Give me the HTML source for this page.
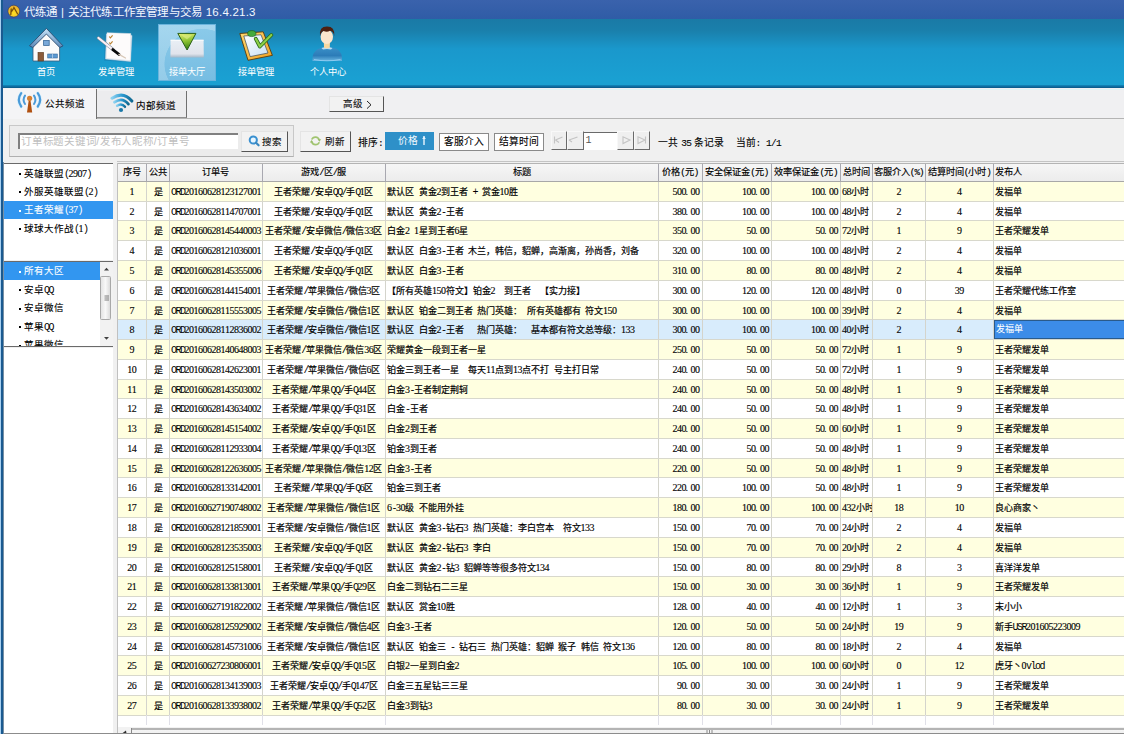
<!DOCTYPE html>
<html lang="zh-CN"><head><meta charset="utf-8">
<style>
*{margin:0;padding:0;box-sizing:border-box}
html,body{width:1124px;height:734px;overflow:hidden;background:#f0f0f0;font-family:"Liberation Sans",sans-serif;position:relative;text-spacing-trim:space-all;font-kerning:none}
.abs{position:absolute}
#lb0{left:0;top:0;width:1px;height:734px;background:#a8d0f0}
#lb1{left:1px;top:0;width:2.2px;height:734px;background:#1a5a90}
#lb2{left:3.2px;top:162px;width:1.3px;height:572px;background:#7890a4}
#title{left:1px;top:0;width:1123px;height:19px;background:linear-gradient(#3a62ac,#2f5ca6)}
#ttext{left:24px;top:2.5px;color:#f4f8ff;font-size:11.5px;letter-spacing:0.22px;white-space:nowrap}
#tool{left:3px;top:19px;width:1121px;height:66px;background:linear-gradient(#1a7aa6 0,#1a80ac 12px,#1a98cc 30px,#1aa0d2 60px,#1aa0d0 100%)}
#toolline{left:3px;top:84.5px;width:1121px;height:4px;background:linear-gradient(#1288bc,#0a5e90 60%,#0c5a86)}
.tb{position:absolute;top:24px;width:58px;height:57px;color:#fff;font-size:10px;text-align:center}
.tlbl{position:absolute;top:65.7px;width:58px;color:#fff;font-size:9.3px;line-height:12px;text-align:center;white-space:nowrap}
.tb.act{background:radial-gradient(ellipse 62px 58px at 44px 40px,rgba(255,255,255,0) 0,rgba(255,255,255,0) 60%,rgba(255,255,255,0.22) 61%,rgba(255,255,255,0.22) 100%),linear-gradient(#8ccbea,#76bde2);box-shadow:inset 0 0 0 1px #6ab4dc;overflow:hidden}
#tabs{left:3px;top:88px;width:1121px;height:31px;background:#f0f0f2}
#tabline{left:3px;top:117.5px;width:1121px;height:1.8px;background:#b4b4b4}
.tab{position:absolute;font-size:9.5px;color:#000;white-space:nowrap}
#tab1{left:3px;top:89px;width:94px;height:30px;background:#f4f4f6;border-right:1px solid #707070}
#tab2{left:97px;top:91px;width:90px;height:27px;background:#ececee;border-right:1px solid #707070;border-bottom:1px solid #909090}
.btn{position:absolute;background:#f2f2f2;border:1px solid #e4e4e4;border-right:1.5px solid #555;border-bottom:1.5px solid #555;font-size:10px;color:#111;text-align:center;white-space:nowrap}
#grp{left:9px;top:125px;width:285px;height:32px;border:1px solid #c8c8c8;border-bottom-color:#b0b0b0;background:#ececec}
#search{left:18px;top:133px;width:220px;height:16px;background:#fff;border-top:2px solid #808080;border-left:2px solid #808080;font-size:10.5px;color:#c0c0c0;line-height:13px;padding-left:1px;white-space:nowrap;letter-spacing:0.75px;overflow:hidden}
.lbtxt{position:absolute;font-size:9.75px;color:#000;white-space:nowrap;word-spacing:0.5px}
b.m2{font-weight:normal;font-family:"Liberation Mono",monospace;font-size:9.5px;letter-spacing:-0.7px}
#price{left:384.5px;top:132px;width:49.5px;height:18px;background:#2e90c8;color:#f4fbff;font-size:9.75px;line-height:18px;text-align:left;padding-left:13.5px;white-space:nowrap}
.sbtn{position:absolute;top:132.5px;height:18px;background:#fff;border:1px solid #8a8a8a;font-size:9.75px;color:#000;line-height:16px;text-align:center;white-space:nowrap}
.pg{position:absolute;top:131px;height:19px;width:16.5px;background:#efefef;border-top:1px solid #f8f8f8;border-left:1px solid #f8f8f8;border-right:1px solid #6a6a6a;border-bottom:1.5px solid #6a6a6a}
#pinput{left:583px;top:131.5px;width:34px;height:18px;background:#fff;border-top:1.5px solid #6a6a6a;border-left:1.5px solid #6a6a6a;font-family:"Liberation Mono",monospace;font-size:10px;color:#555;line-height:16px;padding-left:1.5px}
/* left panel */
#lp1{left:3px;top:162.5px;width:110px;height:97.5px;background:#fff;border-top:1.2px solid #6a6a6a}
#lp2{left:3px;top:261px;width:110px;height:86px;background:#fff;border-top:1.5px solid #6a6a6a;border-bottom:1.5px solid #6a6a6a;overflow:hidden}
#lp3{left:3px;top:348px;width:110px;height:386px;background:#fff}
.li{position:absolute;left:0;width:100%;height:18px;font-size:9.5px;color:#000;white-space:nowrap;line-height:18px;padding-left:21px}
.li::before{content:"";position:absolute;left:15.8px;top:8.6px;width:2.2px;height:2.2px;background:currentColor}
.li.s{background:#3296f0;color:#fff}
.li .n{font-family:"Liberation Mono",monospace;font-size:9px;letter-spacing:-0.9px}
/* table */
#tbl{left:117px;top:163px;width:1007px;height:564px;background:#fff;border-left:1px solid #c0c0c0;overflow:hidden}
#thead{position:absolute;left:0;top:0;width:1100px;height:18.6px;background:linear-gradient(#f6f6f6,#ececec);border-top:1px solid #b4b4b4;border-bottom:1px solid #a8a8a8}
.hc{position:absolute;top:0;height:17px;border-right:1px solid #a8a8b0;font-size:9.2px;color:#000;-webkit-text-stroke:0.15px #000;text-align:center;line-height:17px;white-space:nowrap}
.row{position:absolute;left:0;width:1100px;height:19.77px;border-bottom:1px solid #d8d8cc}
.row.odd{background:#ffffe0}
.row.even{background:#ffffff}
.row.sel{background:#d8ecfc}
.c{position:absolute;top:0;height:19px;border-right:1px solid #d4d4cc;font-size:9px;color:#000;-webkit-text-stroke:0.2px #000;line-height:20px;white-space:nowrap;overflow:hidden}
.c.c{text-align:center}
.c.l{text-align:left;padding-left:1px}
.c.r{text-align:right;padding-right:2px}
.c.selc{background:#3c8ce8;color:#fff;-webkit-text-stroke:0.1px #fff;border:1.5px solid #2a5a8a;line-height:16px}
b.hp{font-weight:normal;font-family:"Liberation Mono",monospace;font-size:9.2px;letter-spacing:-0.92px}
b.m{font-weight:normal;font-family:"Liberation Serif",serif;font-size:10px;letter-spacing:-0.5px;-webkit-text-stroke:0.12px currentColor;vertical-align:0}
b.mm{font-weight:normal;font-family:"Liberation Mono",monospace;font-size:10px;letter-spacing:-1.5px;-webkit-text-stroke:0}
i.dt{font-style:normal;display:inline-block;width:5px;margin-left:-0.5px;letter-spacing:0;text-align:left}
i.sp{display:inline-block;width:4.5px}
.vl{position:absolute;top:552px;width:1px;height:10px;background:#e0e0e8}
#hscroll{left:117px;top:727px;width:1007px;height:7px;background:#f2f2f2;border-left:1px solid #c0c0c0}
.li,.lbtxt,.sbtn,.btn,.tab{-webkit-text-stroke:0.1px #000}
.li.s{-webkit-text-stroke:0.1px #fff}
</style></head>
<body>
<div class="abs" id="title"></div>
<svg class="abs" style="left:7px;top:4px" width="14" height="14" viewBox="0 0 14 14"><defs><radialGradient id="coin" cx="0.5" cy="0.7" r="0.7"><stop offset="0" stop-color="#ffe020"/><stop offset="1" stop-color="#e8a830"/></radialGradient></defs><circle cx="6.8" cy="7.1" r="5.9" fill="url(#coin)" stroke="#3a3a50" stroke-width="0.6"/><path d="M4.2 5 L3.8 10.5 M6.8 3.2 L10.6 10 M6.3 4.8 L4.6 7.5" stroke="#7a5008" stroke-width="1.3" fill="none" stroke-linecap="round"/></svg>
<div class="abs" id="ttext">代练通 | 关注代练工作室管理与交易 16.4.21.3</div>
<div class="abs" id="tool"></div>
<div class="abs" id="toolline"></div>

<div class="tb act" style="left:158px"></div>
<svg class="abs" style="left:24px;top:24px" width="44" height="40" viewBox="0 0 44 40">
 <defs><linearGradient id="roof" x1="0" y1="0" x2="0" y2="1"><stop offset="0" stop-color="#c8e4f8"/><stop offset="1" stop-color="#5a88b8"/></linearGradient></defs>
 <path d="M9 21 L22.4 8.5 L35.6 21 L35.6 37 L9 37 Z" fill="#fbfbfb" stroke="#3a5a78" stroke-width="0.8"/>
 <path d="M5.5 21.8 L22.4 4.4 L39 21.8 L35.8 23.5 L22.4 10 L8.8 23.5 Z" fill="url(#roof)" stroke="#2c4c70" stroke-width="0.9" stroke-linejoin="round"/>
 <rect x="14" y="28.4" width="5.6" height="8.6" fill="#8a5a3a" stroke="#5a3a20" stroke-width="0.6"/>
 <rect x="19.6" y="16.4" width="5.6" height="5" fill="#78a8d8" stroke="#3a6a9a" stroke-width="0.8"/>
 <rect x="23.7" y="30" width="9.6" height="4" fill="#5a98d0" stroke="#3a6a9a" stroke-width="0.6"/>
 <line x1="28.5" y1="30" x2="28.5" y2="34" stroke="#d8e8f8" stroke-width="0.6"/>
</svg>
<svg class="abs" style="left:94px;top:26px" width="44" height="38" viewBox="0 0 44 38">
 <path d="M11.5 8.5 L37.8 8 L37 35 L11 33.8 Z" fill="#1a6a9a" opacity="0.35" transform="translate(-0.8,1)"/>
 <path d="M12.5 8 L38 9.5 L36.5 35.5 L11.5 33 Z" fill="#e4ecf4" stroke="#c0d0e0" stroke-width="0.5"/>
 <path d="M13 6.7 L36.8 7.6 L36.3 34.6 L12.2 32.4 Z" fill="#fdfbfb" stroke="#d0d8e0" stroke-width="0.5"/>
 <path d="M15.2 10.5 l1.2 1.4 l2.2 -2.6" stroke="#b88030" stroke-width="1.1" fill="none"/>
 <path d="M15.2 16.5 l1.2 1.4 l2.2 -2.6" stroke="#b88030" stroke-width="1.1" fill="none"/>
 <line x1="4.5" y1="12" x2="19" y2="23.6" stroke="#7a8a98" stroke-width="3.2" stroke-linecap="round"/>
 <line x1="4.5" y1="12" x2="19" y2="23.6" stroke="#faf0f6" stroke-width="2.2" stroke-linecap="round"/>
 <line x1="18.8" y1="23.6" x2="25" y2="28.4" stroke="#0a0a0a" stroke-width="2.8" stroke-linecap="round"/>
 <line x1="25" y1="28.4" x2="31.5" y2="32" stroke="#d8c8b8" stroke-width="1.4" stroke-linecap="round"/>
</svg>
<svg class="abs" style="left:166px;top:28px" width="44" height="36" viewBox="0 0 44 36">
 <defs><linearGradient id="tray" x1="0" y1="0" x2="0" y2="1"><stop offset="0" stop-color="#f0f2f6"/><stop offset="0.8" stop-color="#e8e6ec"/><stop offset="0.88" stop-color="#d0d4dc"/><stop offset="1" stop-color="#a8b8c8"/></linearGradient>
 <linearGradient id="tri" x1="0.3" y1="0" x2="0.5" y2="1"><stop offset="0" stop-color="#e0ec70"/><stop offset="0.5" stop-color="#88c030"/><stop offset="1" stop-color="#307a10"/></linearGradient></defs>
 <path d="M4.6 11.8 L37.6 11.8 L37.8 29.4 L4.4 29.4 Z" fill="url(#tray)" opacity="0.93"/>
 <path d="M4.6 12.3 L37.6 12.3" stroke="#ffffff" stroke-width="0.8"/>
 <path d="M11.8 5.4 L29.9 5.4 L21.1 22 Z" fill="url(#tri)" stroke="#2a6018" stroke-width="1" stroke-linejoin="round"/>
 <path d="M15.5 7.2 L26 7.2 L21 11.5 Z" fill="#f0f8a0" opacity="0.45"/>
</svg>
<svg class="abs" style="left:234px;top:26px" width="44" height="38" viewBox="0 0 44 38">
 <defs><linearGradient id="clip" x1="0" y1="0" x2="1" y2="1"><stop offset="0" stop-color="#ffd870"/><stop offset="1" stop-color="#f0a020"/></linearGradient>
 <linearGradient id="ppr" x1="0" y1="0" x2="1" y2="1"><stop offset="0" stop-color="#ffffff"/><stop offset="1" stop-color="#c8e0f4"/></linearGradient></defs>
 <path d="M5.8 7.5 L29.2 5.8 L38.4 29.4 L14 34.3 Z" fill="url(#clip)" stroke="#5a3a08" stroke-width="0.9" stroke-linejoin="round"/>
 <path d="M9.8 10 L27 8.8 L34 27 L16.2 30.6 Z" fill="url(#ppr)" stroke="#3a4a5a" stroke-width="0.7"/>
 <ellipse cx="17.8" cy="7.6" rx="4.2" ry="3" fill="#44aa3c" stroke="#1a5a1a" stroke-width="0.6"/>
 <path d="M21.8 12.8 L25.9 20.5 L37.3 9" fill="none" stroke="#2a6a1a" stroke-width="3.8" stroke-linecap="round" stroke-linejoin="round"/>
 <path d="M21.8 12.8 L25.9 20.5 L37.3 9" fill="none" stroke="#8cd048" stroke-width="2.2" stroke-linecap="round" stroke-linejoin="round"/>
</svg>
<svg class="abs" style="left:306px;top:24px" width="44" height="40" viewBox="0 0 44 40">
 <defs><linearGradient id="body" x1="0" y1="0" x2="0" y2="1"><stop offset="0" stop-color="#3a90c8"/><stop offset="0.6" stop-color="#2c7cb8"/><stop offset="1" stop-color="#68b4e0"/></linearGradient></defs>
 <path d="M6.5 37 Q6 28 12 25 Q15 23.5 17 23.5 L25 23.5 Q28 23.5 31 25 Q36.5 28 36 37 Z" fill="url(#body)"/>
 <path d="M8 35.5 Q21 38 34.5 35.5" stroke="#8ccaf0" stroke-width="1.2" fill="none"/>
 <path d="M15.5 24 Q21 22 26.5 24 L25 25.5 Q21 24.5 17 25.5 Z" fill="#b8e0f8"/>
 <path d="M17.8 16 L24 16 L23.8 23.8 Q21 25 18 23.8 Z" fill="#f8d8a0"/>
 <ellipse cx="20.8" cy="12.8" rx="6.2" ry="7.2" fill="#fbe6cc"/>
 <path d="M14 12 Q13 2.5 21 2.6 Q29 2.5 28.2 12 Q27.5 7 24 6.8 Q21 8.5 17.5 7 Q14.8 8 14 12 Z" fill="#4e2010"/>
</svg>
<div class="tlbl" style="left:17px">首页</div>
<div class="tlbl" style="left:87px">发单管理</div>
<div class="tlbl" style="left:158px">接单大厅</div>
<div class="tlbl" style="left:227px">接单管理</div>
<div class="tlbl" style="left:299px">个人中心</div>

<div class="abs" id="tabs"></div>
<div class="abs" id="tabline"></div>
<div class="abs" style="left:3px;top:88.5px;width:1121px;height:1.5px;background:#dff4f6"></div>
<div class="abs" id="tab1"><span class="tab" style="left:42px;top:7px">公共频道</span></div>
<svg class="abs" style="left:14px;top:90px" width="30" height="26" viewBox="0 0 30 26">
 <g fill="none" stroke-linecap="round">
 <path d="M7.2 3.2 Q2.5 9.8 7.2 16.5" stroke="#d8f0fc" stroke-width="3.6"/>
 <path d="M23.8 3.2 Q28.5 9.8 23.8 16.5" stroke="#d8f0fc" stroke-width="3.6"/>
 <path d="M7.2 3.2 Q2.5 9.8 7.2 16.5" stroke="#4a9ad8" stroke-width="2.2"/>
 <path d="M11 5.6 Q8.2 9.8 11 14" stroke="#4a9ad8" stroke-width="2"/>
 <path d="M23.8 3.2 Q28.5 9.8 23.8 16.5" stroke="#4a9ad8" stroke-width="2.2"/>
 <path d="M20 5.6 Q22.8 9.8 20 14" stroke="#4a9ad8" stroke-width="2"/>
 </g>
 <path d="M14.8 9.8 L16.4 9.8 L18.2 22.4 L13 22.4 Z" fill="#b05010"/>
 <circle cx="15.6" cy="8.3" r="2.6" fill="#d88030"/>
</svg>
<div class="abs" id="tab2"><span class="tab" style="left:39px;top:7px">内部频道</span></div>
<svg class="abs" style="left:106px;top:90px" width="30" height="26" viewBox="0 0 30 26">
 <defs><linearGradient id="wf" x1="0" y1="0" x2="1" y2="0"><stop offset="0" stop-color="#8ad0f0"/><stop offset="0.5" stop-color="#2a98d0"/><stop offset="1" stop-color="#106890"/></linearGradient></defs>
 <g transform="translate(-1,0) rotate(8 15 20)" fill="none" stroke="url(#wf)" stroke-linecap="round">
 <path d="M5.5 9.5 Q15.5 0.5 25.5 9.5" stroke-width="3"/>
 <path d="M8.5 13 Q15.5 6.5 22.5 13" stroke-width="2.8"/>
 <path d="M11.5 16.2 Q15.5 12.5 19.5 16.2" stroke-width="2.4"/>
 </g>
 <circle cx="15" cy="20" r="2.1" fill="#1a78a8"/>
</svg>
<div class="btn" style="left:328.5px;top:96.3px;width:55.5px;height:16px;line-height:14px;text-align:left;padding-left:13px;font-size:9.5px">高级</div>
<svg class="abs" style="left:364.5px;top:98.5px" width="8" height="12" viewBox="0 0 8 12"><path d="M2 2 L6 5.8 L2 9.6" fill="none" stroke="#222" stroke-width="1"/></svg>

<div class="abs" id="grp"></div>
<div class="abs" id="search">订单标题关键词/发布人昵称/订单号</div>
<div class="btn" style="left:241px;top:131px;width:47px;height:21px;line-height:19px;padding-left:14.5px;font-size:9.5px">搜索</div>
<svg class="abs" style="left:240px;top:128px" width="24" height="24" viewBox="0 0 24 24">
 <circle cx="13.3" cy="12" r="3.6" fill="#e8f6ff" stroke="#3a90d0" stroke-width="2"/>
 <line x1="16" y1="14.8" x2="18.6" y2="17.3" stroke="#3a88c0" stroke-width="2.2" stroke-linecap="round"/>
</svg>
<div class="btn" style="left:300px;top:131px;width:51px;height:21px;line-height:19px;padding-left:18px;font-size:9.5px">刷新</div>
<svg class="abs" style="left:298px;top:128px" width="24" height="24" viewBox="0 0 24 24">
 <path d="M13.74 11.53 A4 4 0 0 1 21.2 11.9" fill="none" stroke="#a0c470" stroke-width="1.7"/>
 <path d="M21.26 14.27 A4 4 0 0 1 13.8 13.9" fill="none" stroke="#a0c470" stroke-width="1.7"/>
 <path d="M19.6 11.2 L23.2 11.2 L21.4 13.8 Z" fill="#98bc68"/>
 <path d="M11.8 14.6 L15.4 14.6 L13.6 12 Z" fill="#98bc68"/>
</svg>
<div class="lbtxt" style="left:358px;top:134.5px">排序<b class="m2">:</b></div>
<div class="abs" id="price">价格</div>
<svg class="abs" style="left:420px;top:135px" width="8" height="12" viewBox="0 0 8 12"><path d="M4 1 L4 10" stroke="#eaf6ff" stroke-width="1.4"/><path d="M2.2 4 L4 1.2 L5.8 4 Z" fill="#eaf6ff"/></svg>
<div class="sbtn" style="left:439px;width:50px">客服介入</div>
<div class="sbtn" style="left:494px;width:50px">结算时间</div>
<div class="pg" style="left:550.5px"></div>
<div class="pg" style="left:566.5px;width:17px"></div>
<div class="abs" id="pinput">1</div>
<div class="pg" style="left:617px;width:16.5px"></div>
<div class="pg" style="left:633.5px"></div>
<svg class="abs" style="left:548px;top:128px" width="104" height="24" viewBox="0 0 104 24">
 <g stroke="#c4c4c4" stroke-width="1.1" fill="none">
  <path d="M6.5 8.5 L6.5 15.5 M7.5 12 L14.5 9"/>
  <path d="M7.5 12 L11 14.5"/>
  <path d="M21 12 L29.5 9 M21 12 L24 14"/>
  <path d="M75 8.8 L75 15.5 L82 12 Z"/>
  <path d="M90 8.8 L90 15.5 L97 12 Z M97.5 8.5 L97.5 15.5"/>
 </g>
</svg>
<div class="lbtxt" style="left:658px;top:134.5px">一共 <b class="m2">35</b> 条记录</div>
<div class="lbtxt" style="left:735.5px;top:134.5px">当前<b class="m2">:&nbsp;1/1</b></div>

<div class="abs" id="lp1">
<div class="li" style="top:1px">英雄联盟<b class="mm">(</b><b class="m">2907</b><b class="mm">)</b></div>
<div class="li" style="top:19px">外服英雄联盟<b class="mm">(</b><b class="m">2</b><b class="mm">)</b></div>
<div class="li s" style="top:37.5px">王者荣耀<b class="mm">(</b><b class="m">37</b><b class="mm">)</b></div>
<div class="li" style="top:56px">球球大作战<b class="mm">(</b><b class="m">1</b><b class="mm">)</b></div>
</div>
<div class="abs" id="lp2">
<div class="li s" style="top:0;width:96.5px">所有大区</div>
<div class="li" style="top:18.5px">安卓<b class="mm">QQ</b></div>
<div class="li" style="top:37px">安卓微信</div>
<div class="li" style="top:55.5px">苹果<b class="mm">QQ</b></div>
<div class="li" style="top:74px">苹果微信</div>
<div style="position:absolute;left:96.5px;top:0;width:13px;height:85px;background:#f2f2f2"></div>
<div style="position:absolute;left:97px;top:13.5px;width:10.5px;height:44px;border:1px solid #a8a8a8;border-radius:1.5px;background:linear-gradient(90deg,#e4e4e4,#f8f8f8 50%,#dcdcdc)"></div>
<svg style="position:absolute;left:96.5px;top:0" width="13" height="85" viewBox="0 0 13 85">
 <path d="M4 8.5 L6.5 5.8 L9 8.5 Z" fill="#404040"/>
 <path d="M4 75 L6.5 77.7 L9 75 Z" fill="#404040"/>
 <path d="M4.5 34 L9 34 M4.5 36 L9 36 M4.5 38 L9 38" stroke="#606060" stroke-width="0.8"/>
</svg>
</div>
<div class="abs" id="lp3"></div>

<div class="abs" style="left:117px;top:160.5px;width:1007px;height:1px;background:#c4c4c4"></div>
<div class="abs" id="tbl">
<div id="thead"><div class="hc" style="left:-0.50px;width:29.50px">序号</div><div class="hc" style="left:29.00px;width:23.00px">公共</div><div class="hc" style="left:52.00px;width:92.50px">订单号</div><div class="hc" style="left:144.50px;width:123.50px">游戏<b class="hp">/</b>区<b class="hp">/</b>服</div><div class="hc" style="left:268.00px;width:273.00px">标题</div><div class="hc" style="left:541.00px;width:43.50px">价格<b class="hp">(</b>元<b class="hp">)</b></div><div class="hc" style="left:584.50px;width:69.50px">安全保证金<b class="hp">(</b>元<b class="hp">)</b></div><div class="hc" style="left:654.00px;width:69.00px">效率保证金<b class="hp">(</b>元<b class="hp">)</b></div><div class="hc" style="left:723.00px;width:31.50px">总时间</div><div class="hc" style="left:754.50px;width:53.50px">客服介入<b class="hp">(</b><b class="hp">%</b><b class="hp">)</b></div><div class="hc" style="left:808.00px;width:67.50px">结算时间<b class="hp">(</b>小时<b class="hp">)</b></div><div class="hc" style="text-align:left;padding-left:1px;left:875.50px;width:207.00px">发布人</div></div>
<div class="row odd" style="top:18.90px"><div class="c c" style="left:-0.50px;width:29.50px"><b class="m">1</b></div><div class="c c" style="left:29.00px;width:23.00px">是</div><div class="c l" style="left:52.00px;width:92.50px"><b class="mm">ORD</b><b class="m">20160628123127001</b></div><div class="c c" style="left:144.50px;width:123.50px">王者荣耀<b class="mm">/</b>安卓<b class="mm">QQ/</b>手<b class="mm">Q</b><b class="m">1</b>区</div><div class="c l" style="left:268.00px;width:273.00px">默认区<b class="mm"> </b>黄金<b class="m">2</b>到王者<b class="mm"> + </b>赏金<b class="m">10</b>胜</div><div class="c r" style="left:541.00px;width:43.50px"><b class="m">500<i class="dt">.</i>00</b></div><div class="c r" style="left:584.50px;width:69.50px"><b class="m">100<i class="dt">.</i>00</b></div><div class="c r" style="left:654.00px;width:69.00px"><b class="m">100<i class="dt">.</i>00</b></div><div class="c l" style="left:723.00px;width:31.50px"><b class="m">68</b>小时</div><div class="c c" style="left:754.50px;width:53.50px"><b class="m">2</b></div><div class="c c" style="left:808.00px;width:67.50px"><b class="m">4</b></div><div class="c l" style="left:875.50px;width:207.00px">发福单</div></div><div class="row even" style="top:38.67px"><div class="c c" style="left:-0.50px;width:29.50px"><b class="m">2</b></div><div class="c c" style="left:29.00px;width:23.00px">是</div><div class="c l" style="left:52.00px;width:92.50px"><b class="mm">ORD</b><b class="m">20160628114707001</b></div><div class="c c" style="left:144.50px;width:123.50px">王者荣耀<b class="mm">/</b>安卓<b class="mm">QQ/</b>手<b class="mm">Q</b><b class="m">1</b>区</div><div class="c l" style="left:268.00px;width:273.00px">默认区<b class="mm"> </b>黄金<b class="m">2</b><b class="mm">-</b>王者</div><div class="c r" style="left:541.00px;width:43.50px"><b class="m">380<i class="dt">.</i>00</b></div><div class="c r" style="left:584.50px;width:69.50px"><b class="m">100<i class="dt">.</i>00</b></div><div class="c r" style="left:654.00px;width:69.00px"><b class="m">100<i class="dt">.</i>00</b></div><div class="c l" style="left:723.00px;width:31.50px"><b class="m">48</b>小时</div><div class="c c" style="left:754.50px;width:53.50px"><b class="m">2</b></div><div class="c c" style="left:808.00px;width:67.50px"><b class="m">4</b></div><div class="c l" style="left:875.50px;width:207.00px">发福单</div></div><div class="row odd" style="top:58.44px"><div class="c c" style="left:-0.50px;width:29.50px"><b class="m">3</b></div><div class="c c" style="left:29.00px;width:23.00px">是</div><div class="c l" style="left:52.00px;width:92.50px"><b class="mm">ORD</b><b class="m">20160628145440003</b></div><div class="c c" style="left:144.50px;width:123.50px">王者荣耀<b class="mm">/</b>安卓微信<b class="mm">/</b>微信<b class="m">33</b>区</div><div class="c l" style="left:268.00px;width:273.00px">白金<b class="m">2</b><b class="mm"> </b><b class="m">1</b>星到王者<b class="m">6</b>星</div><div class="c r" style="left:541.00px;width:43.50px"><b class="m">350<i class="dt">.</i>00</b></div><div class="c r" style="left:584.50px;width:69.50px"><b class="m">50<i class="dt">.</i>00</b></div><div class="c r" style="left:654.00px;width:69.00px"><b class="m">50<i class="dt">.</i>00</b></div><div class="c l" style="left:723.00px;width:31.50px"><b class="m">72</b>小时</div><div class="c c" style="left:754.50px;width:53.50px"><b class="m">1</b></div><div class="c c" style="left:808.00px;width:67.50px"><b class="m">9</b></div><div class="c l" style="left:875.50px;width:207.00px">王者荣耀发单</div></div><div class="row even" style="top:78.21px"><div class="c c" style="left:-0.50px;width:29.50px"><b class="m">4</b></div><div class="c c" style="left:29.00px;width:23.00px">是</div><div class="c l" style="left:52.00px;width:92.50px"><b class="mm">ORD</b><b class="m">20160628121036001</b></div><div class="c c" style="left:144.50px;width:123.50px">王者荣耀<b class="mm">/</b>安卓<b class="mm">QQ/</b>手<b class="mm">Q</b><b class="m">1</b>区</div><div class="c l" style="left:268.00px;width:273.00px">默认区<b class="mm"> </b>白金<b class="m">3</b><b class="mm">-</b>王者<b class="mm"> </b>木兰，韩信，貂蝉，高渐离，孙尚香，刘备</div><div class="c r" style="left:541.00px;width:43.50px"><b class="m">320<i class="dt">.</i>00</b></div><div class="c r" style="left:584.50px;width:69.50px"><b class="m">100<i class="dt">.</i>00</b></div><div class="c r" style="left:654.00px;width:69.00px"><b class="m">100<i class="dt">.</i>00</b></div><div class="c l" style="left:723.00px;width:31.50px"><b class="m">48</b>小时</div><div class="c c" style="left:754.50px;width:53.50px"><b class="m">2</b></div><div class="c c" style="left:808.00px;width:67.50px"><b class="m">4</b></div><div class="c l" style="left:875.50px;width:207.00px">发福单</div></div><div class="row odd" style="top:97.98px"><div class="c c" style="left:-0.50px;width:29.50px"><b class="m">5</b></div><div class="c c" style="left:29.00px;width:23.00px">是</div><div class="c l" style="left:52.00px;width:92.50px"><b class="mm">ORD</b><b class="m">20160628145355006</b></div><div class="c c" style="left:144.50px;width:123.50px">王者荣耀<b class="mm">/</b>安卓<b class="mm">QQ/</b>手<b class="mm">Q</b><b class="m">1</b>区</div><div class="c l" style="left:268.00px;width:273.00px">默认区<b class="mm"> </b>白金<b class="m">3</b><b class="mm">-</b>王者</div><div class="c r" style="left:541.00px;width:43.50px"><b class="m">310<i class="dt">.</i>00</b></div><div class="c r" style="left:584.50px;width:69.50px"><b class="m">80<i class="dt">.</i>00</b></div><div class="c r" style="left:654.00px;width:69.00px"><b class="m">80<i class="dt">.</i>00</b></div><div class="c l" style="left:723.00px;width:31.50px"><b class="m">48</b>小时</div><div class="c c" style="left:754.50px;width:53.50px"><b class="m">2</b></div><div class="c c" style="left:808.00px;width:67.50px"><b class="m">4</b></div><div class="c l" style="left:875.50px;width:207.00px">发福单</div></div><div class="row even" style="top:117.75px"><div class="c c" style="left:-0.50px;width:29.50px"><b class="m">6</b></div><div class="c c" style="left:29.00px;width:23.00px">是</div><div class="c l" style="left:52.00px;width:92.50px"><b class="mm">ORD</b><b class="m">20160628144154001</b></div><div class="c c" style="left:144.50px;width:123.50px">王者荣耀<b class="mm">/</b>苹果微信<b class="mm">/</b>微信<b class="m">3</b>区</div><div class="c l" style="left:268.00px;width:273.00px">【所有英雄<b class="m">150</b>符文】铂金<b class="m">2</b><i class="sp"></i><b class="mm"> </b>到王者<i class="sp"></i><b class="mm"> </b>【实力接】</div><div class="c r" style="left:541.00px;width:43.50px"><b class="m">300<i class="dt">.</i>00</b></div><div class="c r" style="left:584.50px;width:69.50px"><b class="m">120<i class="dt">.</i>00</b></div><div class="c r" style="left:654.00px;width:69.00px"><b class="m">120<i class="dt">.</i>00</b></div><div class="c l" style="left:723.00px;width:31.50px"><b class="m">48</b>小时</div><div class="c c" style="left:754.50px;width:53.50px"><b class="m">0</b></div><div class="c c" style="left:808.00px;width:67.50px"><b class="m">39</b></div><div class="c l" style="left:875.50px;width:207.00px">王者荣耀代练工作室</div></div><div class="row odd" style="top:137.52px"><div class="c c" style="left:-0.50px;width:29.50px"><b class="m">7</b></div><div class="c c" style="left:29.00px;width:23.00px">是</div><div class="c l" style="left:52.00px;width:92.50px"><b class="mm">ORD</b><b class="m">20160628115553005</b></div><div class="c c" style="left:144.50px;width:123.50px">王者荣耀<b class="mm">/</b>安卓微信<b class="mm">/</b>微信<b class="m">1</b>区</div><div class="c l" style="left:268.00px;width:273.00px">默认区<b class="mm"> </b>铂金二到王者<b class="mm"> </b>热门英雄：<b class="mm"> </b>所有英雄都有<b class="mm"> </b>符文<b class="m">150</b></div><div class="c r" style="left:541.00px;width:43.50px"><b class="m">300<i class="dt">.</i>00</b></div><div class="c r" style="left:584.50px;width:69.50px"><b class="m">100<i class="dt">.</i>00</b></div><div class="c r" style="left:654.00px;width:69.00px"><b class="m">100<i class="dt">.</i>00</b></div><div class="c l" style="left:723.00px;width:31.50px"><b class="m">39</b>小时</div><div class="c c" style="left:754.50px;width:53.50px"><b class="m">2</b></div><div class="c c" style="left:808.00px;width:67.50px"><b class="m">4</b></div><div class="c l" style="left:875.50px;width:207.00px">发福单</div></div><div class="row sel" style="top:157.29px"><div class="c c" style="left:-0.50px;width:29.50px"><b class="m">8</b></div><div class="c c" style="left:29.00px;width:23.00px">是</div><div class="c l" style="left:52.00px;width:92.50px"><b class="mm">ORD</b><b class="m">20160628112836002</b></div><div class="c c" style="left:144.50px;width:123.50px">王者荣耀<b class="mm">/</b>安卓微信<b class="mm">/</b>微信<b class="m">1</b>区</div><div class="c l" style="left:268.00px;width:273.00px">默认区<b class="mm"> </b>白金<b class="m">2</b><b class="mm">-</b>王者<i class="sp"></i><b class="mm"> </b><i class="sp"></i>热门英雄：<i class="sp"></i><b class="mm"> </b>基本都有符文总等级：<b class="m">133</b></div><div class="c r" style="left:541.00px;width:43.50px"><b class="m">300<i class="dt">.</i>00</b></div><div class="c r" style="left:584.50px;width:69.50px"><b class="m">100<i class="dt">.</i>00</b></div><div class="c r" style="left:654.00px;width:69.00px"><b class="m">100<i class="dt">.</i>00</b></div><div class="c l" style="left:723.00px;width:31.50px"><b class="m">40</b>小时</div><div class="c c" style="left:754.50px;width:53.50px"><b class="m">2</b></div><div class="c c" style="left:808.00px;width:67.50px"><b class="m">4</b></div><div class="c l selc" style="left:875.50px;width:207.00px">发福单</div></div><div class="row odd" style="top:177.06px"><div class="c c" style="left:-0.50px;width:29.50px"><b class="m">9</b></div><div class="c c" style="left:29.00px;width:23.00px">是</div><div class="c l" style="left:52.00px;width:92.50px"><b class="mm">ORD</b><b class="m">20160628140648003</b></div><div class="c c" style="left:144.50px;width:123.50px">王者荣耀<b class="mm">/</b>苹果微信<b class="mm">/</b>微信<b class="m">36</b>区</div><div class="c l" style="left:268.00px;width:273.00px">荣耀黄金一段到王者一星</div><div class="c r" style="left:541.00px;width:43.50px"><b class="m">250<i class="dt">.</i>00</b></div><div class="c r" style="left:584.50px;width:69.50px"><b class="m">50<i class="dt">.</i>00</b></div><div class="c r" style="left:654.00px;width:69.00px"><b class="m">50<i class="dt">.</i>00</b></div><div class="c l" style="left:723.00px;width:31.50px"><b class="m">72</b>小时</div><div class="c c" style="left:754.50px;width:53.50px"><b class="m">1</b></div><div class="c c" style="left:808.00px;width:67.50px"><b class="m">9</b></div><div class="c l" style="left:875.50px;width:207.00px">王者荣耀发单</div></div><div class="row even" style="top:196.83px"><div class="c c" style="left:-0.50px;width:29.50px"><b class="m">10</b></div><div class="c c" style="left:29.00px;width:23.00px">是</div><div class="c l" style="left:52.00px;width:92.50px"><b class="mm">ORD</b><b class="m">20160628142623001</b></div><div class="c c" style="left:144.50px;width:123.50px">王者荣耀<b class="mm">/</b>苹果微信<b class="mm">/</b>微信<b class="m">6</b>区</div><div class="c l" style="left:268.00px;width:273.00px">铂金三到王者一星<i class="sp"></i><b class="mm"> </b>每天<b class="m">11</b>点到<b class="m">13</b>点不打<b class="mm"> </b>号主打日常</div><div class="c r" style="left:541.00px;width:43.50px"><b class="m">240<i class="dt">.</i>00</b></div><div class="c r" style="left:584.50px;width:69.50px"><b class="m">50<i class="dt">.</i>00</b></div><div class="c r" style="left:654.00px;width:69.00px"><b class="m">50<i class="dt">.</i>00</b></div><div class="c l" style="left:723.00px;width:31.50px"><b class="m">72</b>小时</div><div class="c c" style="left:754.50px;width:53.50px"><b class="m">1</b></div><div class="c c" style="left:808.00px;width:67.50px"><b class="m">9</b></div><div class="c l" style="left:875.50px;width:207.00px">王者荣耀发单</div></div><div class="row odd" style="top:216.60px"><div class="c c" style="left:-0.50px;width:29.50px"><b class="m">11</b></div><div class="c c" style="left:29.00px;width:23.00px">是</div><div class="c l" style="left:52.00px;width:92.50px"><b class="mm">ORD</b><b class="m">20160628143503002</b></div><div class="c c" style="left:144.50px;width:123.50px">王者荣耀<b class="mm">/</b>苹果<b class="mm">QQ/</b>手<b class="mm">Q</b><b class="m">44</b>区</div><div class="c l" style="left:268.00px;width:273.00px">白金<b class="m">3</b><b class="mm">-</b>王者制定荆轲</div><div class="c r" style="left:541.00px;width:43.50px"><b class="m">240<i class="dt">.</i>00</b></div><div class="c r" style="left:584.50px;width:69.50px"><b class="m">50<i class="dt">.</i>00</b></div><div class="c r" style="left:654.00px;width:69.00px"><b class="m">50<i class="dt">.</i>00</b></div><div class="c l" style="left:723.00px;width:31.50px"><b class="m">48</b>小时</div><div class="c c" style="left:754.50px;width:53.50px"><b class="m">1</b></div><div class="c c" style="left:808.00px;width:67.50px"><b class="m">9</b></div><div class="c l" style="left:875.50px;width:207.00px">王者荣耀发单</div></div><div class="row even" style="top:236.37px"><div class="c c" style="left:-0.50px;width:29.50px"><b class="m">12</b></div><div class="c c" style="left:29.00px;width:23.00px">是</div><div class="c l" style="left:52.00px;width:92.50px"><b class="mm">ORD</b><b class="m">20160628143634002</b></div><div class="c c" style="left:144.50px;width:123.50px">王者荣耀<b class="mm">/</b>苹果<b class="mm">QQ/</b>手<b class="mm">Q</b><b class="m">31</b>区</div><div class="c l" style="left:268.00px;width:273.00px">白金<b class="mm">-</b>王者</div><div class="c r" style="left:541.00px;width:43.50px"><b class="m">240<i class="dt">.</i>00</b></div><div class="c r" style="left:584.50px;width:69.50px"><b class="m">50<i class="dt">.</i>00</b></div><div class="c r" style="left:654.00px;width:69.00px"><b class="m">50<i class="dt">.</i>00</b></div><div class="c l" style="left:723.00px;width:31.50px"><b class="m">48</b>小时</div><div class="c c" style="left:754.50px;width:53.50px"><b class="m">1</b></div><div class="c c" style="left:808.00px;width:67.50px"><b class="m">9</b></div><div class="c l" style="left:875.50px;width:207.00px">王者荣耀发单</div></div><div class="row odd" style="top:256.14px"><div class="c c" style="left:-0.50px;width:29.50px"><b class="m">13</b></div><div class="c c" style="left:29.00px;width:23.00px">是</div><div class="c l" style="left:52.00px;width:92.50px"><b class="mm">ORD</b><b class="m">20160628145154002</b></div><div class="c c" style="left:144.50px;width:123.50px">王者荣耀<b class="mm">/</b>安卓<b class="mm">QQ/</b>手<b class="mm">Q</b><b class="m">61</b>区</div><div class="c l" style="left:268.00px;width:273.00px">白金<b class="m">2</b>到王者</div><div class="c r" style="left:541.00px;width:43.50px"><b class="m">240<i class="dt">.</i>00</b></div><div class="c r" style="left:584.50px;width:69.50px"><b class="m">50<i class="dt">.</i>00</b></div><div class="c r" style="left:654.00px;width:69.00px"><b class="m">50<i class="dt">.</i>00</b></div><div class="c l" style="left:723.00px;width:31.50px"><b class="m">60</b>小时</div><div class="c c" style="left:754.50px;width:53.50px"><b class="m">1</b></div><div class="c c" style="left:808.00px;width:67.50px"><b class="m">9</b></div><div class="c l" style="left:875.50px;width:207.00px">王者荣耀发单</div></div><div class="row even" style="top:275.91px"><div class="c c" style="left:-0.50px;width:29.50px"><b class="m">14</b></div><div class="c c" style="left:29.00px;width:23.00px">是</div><div class="c l" style="left:52.00px;width:92.50px"><b class="mm">ORD</b><b class="m">20160628112933004</b></div><div class="c c" style="left:144.50px;width:123.50px">王者荣耀<b class="mm">/</b>苹果<b class="mm">QQ/</b>手<b class="mm">Q</b><b class="m">13</b>区</div><div class="c l" style="left:268.00px;width:273.00px">铂金<b class="m">3</b>到王者</div><div class="c r" style="left:541.00px;width:43.50px"><b class="m">240<i class="dt">.</i>00</b></div><div class="c r" style="left:584.50px;width:69.50px"><b class="m">50<i class="dt">.</i>00</b></div><div class="c r" style="left:654.00px;width:69.00px"><b class="m">50<i class="dt">.</i>00</b></div><div class="c l" style="left:723.00px;width:31.50px"><b class="m">48</b>小时</div><div class="c c" style="left:754.50px;width:53.50px"><b class="m">1</b></div><div class="c c" style="left:808.00px;width:67.50px"><b class="m">9</b></div><div class="c l" style="left:875.50px;width:207.00px">王者荣耀发单</div></div><div class="row odd" style="top:295.68px"><div class="c c" style="left:-0.50px;width:29.50px"><b class="m">15</b></div><div class="c c" style="left:29.00px;width:23.00px">是</div><div class="c l" style="left:52.00px;width:92.50px"><b class="mm">ORD</b><b class="m">20160628122636005</b></div><div class="c c" style="left:144.50px;width:123.50px">王者荣耀<b class="mm">/</b>苹果微信<b class="mm">/</b>微信<b class="m">12</b>区</div><div class="c l" style="left:268.00px;width:273.00px">白金<b class="m">3</b><b class="mm">-</b>王者</div><div class="c r" style="left:541.00px;width:43.50px"><b class="m">220<i class="dt">.</i>00</b></div><div class="c r" style="left:584.50px;width:69.50px"><b class="m">50<i class="dt">.</i>00</b></div><div class="c r" style="left:654.00px;width:69.00px"><b class="m">50<i class="dt">.</i>00</b></div><div class="c l" style="left:723.00px;width:31.50px"><b class="m">48</b>小时</div><div class="c c" style="left:754.50px;width:53.50px"><b class="m">1</b></div><div class="c c" style="left:808.00px;width:67.50px"><b class="m">9</b></div><div class="c l" style="left:875.50px;width:207.00px">王者荣耀发单</div></div><div class="row even" style="top:315.45px"><div class="c c" style="left:-0.50px;width:29.50px"><b class="m">16</b></div><div class="c c" style="left:29.00px;width:23.00px">是</div><div class="c l" style="left:52.00px;width:92.50px"><b class="mm">ORD</b><b class="m">20160628133142001</b></div><div class="c c" style="left:144.50px;width:123.50px">王者荣耀<b class="mm">/</b>苹果<b class="mm">QQ/</b>手<b class="mm">Q</b><b class="m">6</b>区</div><div class="c l" style="left:268.00px;width:273.00px">铂金三到王者</div><div class="c r" style="left:541.00px;width:43.50px"><b class="m">220<i class="dt">.</i>00</b></div><div class="c r" style="left:584.50px;width:69.50px"><b class="m">100<i class="dt">.</i>00</b></div><div class="c r" style="left:654.00px;width:69.00px"><b class="m">50<i class="dt">.</i>00</b></div><div class="c l" style="left:723.00px;width:31.50px"><b class="m">48</b>小时</div><div class="c c" style="left:754.50px;width:53.50px"><b class="m">1</b></div><div class="c c" style="left:808.00px;width:67.50px"><b class="m">9</b></div><div class="c l" style="left:875.50px;width:207.00px">王者荣耀发单</div></div><div class="row odd" style="top:335.22px"><div class="c c" style="left:-0.50px;width:29.50px"><b class="m">17</b></div><div class="c c" style="left:29.00px;width:23.00px">是</div><div class="c l" style="left:52.00px;width:92.50px"><b class="mm">ORD</b><b class="m">20160627190748002</b></div><div class="c c" style="left:144.50px;width:123.50px">王者荣耀<b class="mm">/</b>苹果微信<b class="mm">/</b>微信<b class="m">1</b>区</div><div class="c l" style="left:268.00px;width:273.00px"><b class="m">6</b><b class="mm">-</b><b class="m">30</b>级<b class="mm"> </b>不能用外挂</div><div class="c r" style="left:541.00px;width:43.50px"><b class="m">180<i class="dt">.</i>00</b></div><div class="c r" style="left:584.50px;width:69.50px"><b class="m">100<i class="dt">.</i>00</b></div><div class="c r" style="left:654.00px;width:69.00px"><b class="m">100<i class="dt">.</i>00</b></div><div class="c l" style="left:723.00px;width:31.50px"><b class="m">432</b>小时</div><div class="c c" style="left:754.50px;width:53.50px"><b class="m">18</b></div><div class="c c" style="left:808.00px;width:67.50px"><b class="m">10</b></div><div class="c l" style="left:875.50px;width:207.00px">良心商家丶</div></div><div class="row even" style="top:354.99px"><div class="c c" style="left:-0.50px;width:29.50px"><b class="m">18</b></div><div class="c c" style="left:29.00px;width:23.00px">是</div><div class="c l" style="left:52.00px;width:92.50px"><b class="mm">ORD</b><b class="m">20160628121859001</b></div><div class="c c" style="left:144.50px;width:123.50px">王者荣耀<b class="mm">/</b>安卓微信<b class="mm">/</b>微信<b class="m">1</b>区</div><div class="c l" style="left:268.00px;width:273.00px">默认区<b class="mm"> </b>黄金<b class="m">3</b><b class="mm">-</b>钻石<b class="m">3</b><b class="mm"> </b>热门英雄：李白宫本<i class="sp"></i><b class="mm"> </b>符文<b class="m">133</b></div><div class="c r" style="left:541.00px;width:43.50px"><b class="m">150<i class="dt">.</i>00</b></div><div class="c r" style="left:584.50px;width:69.50px"><b class="m">70<i class="dt">.</i>00</b></div><div class="c r" style="left:654.00px;width:69.00px"><b class="m">70<i class="dt">.</i>00</b></div><div class="c l" style="left:723.00px;width:31.50px"><b class="m">24</b>小时</div><div class="c c" style="left:754.50px;width:53.50px"><b class="m">2</b></div><div class="c c" style="left:808.00px;width:67.50px"><b class="m">4</b></div><div class="c l" style="left:875.50px;width:207.00px">发福单</div></div><div class="row odd" style="top:374.76px"><div class="c c" style="left:-0.50px;width:29.50px"><b class="m">19</b></div><div class="c c" style="left:29.00px;width:23.00px">是</div><div class="c l" style="left:52.00px;width:92.50px"><b class="mm">ORD</b><b class="m">20160628123535003</b></div><div class="c c" style="left:144.50px;width:123.50px">王者荣耀<b class="mm">/</b>安卓<b class="mm">QQ/</b>手<b class="mm">Q</b><b class="m">1</b>区</div><div class="c l" style="left:268.00px;width:273.00px">默认区<b class="mm"> </b>黄金<b class="m">2</b><b class="mm">-</b>钻石<b class="m">3</b><b class="mm"> </b>李白</div><div class="c r" style="left:541.00px;width:43.50px"><b class="m">150<i class="dt">.</i>00</b></div><div class="c r" style="left:584.50px;width:69.50px"><b class="m">70<i class="dt">.</i>00</b></div><div class="c r" style="left:654.00px;width:69.00px"><b class="m">70<i class="dt">.</i>00</b></div><div class="c l" style="left:723.00px;width:31.50px"><b class="m">20</b>小时</div><div class="c c" style="left:754.50px;width:53.50px"><b class="m">2</b></div><div class="c c" style="left:808.00px;width:67.50px"><b class="m">4</b></div><div class="c l" style="left:875.50px;width:207.00px">发福单</div></div><div class="row even" style="top:394.53px"><div class="c c" style="left:-0.50px;width:29.50px"><b class="m">20</b></div><div class="c c" style="left:29.00px;width:23.00px">是</div><div class="c l" style="left:52.00px;width:92.50px"><b class="mm">ORD</b><b class="m">20160628125158001</b></div><div class="c c" style="left:144.50px;width:123.50px">王者荣耀<b class="mm">/</b>安卓<b class="mm">QQ/</b>手<b class="mm">Q</b><b class="m">1</b>区</div><div class="c l" style="left:268.00px;width:273.00px">默认区<b class="mm"> </b>黄金<b class="m">2</b><b class="mm">-</b>钻<b class="m">3</b><b class="mm"> </b>貂蝉等等很多符文<b class="m">134</b></div><div class="c r" style="left:541.00px;width:43.50px"><b class="m">150<i class="dt">.</i>00</b></div><div class="c r" style="left:584.50px;width:69.50px"><b class="m">80<i class="dt">.</i>00</b></div><div class="c r" style="left:654.00px;width:69.00px"><b class="m">80<i class="dt">.</i>00</b></div><div class="c l" style="left:723.00px;width:31.50px"><b class="m">29</b>小时</div><div class="c c" style="left:754.50px;width:53.50px"><b class="m">8</b></div><div class="c c" style="left:808.00px;width:67.50px"><b class="m">3</b></div><div class="c l" style="left:875.50px;width:207.00px">喜洋洋发单</div></div><div class="row odd" style="top:414.30px"><div class="c c" style="left:-0.50px;width:29.50px"><b class="m">21</b></div><div class="c c" style="left:29.00px;width:23.00px">是</div><div class="c l" style="left:52.00px;width:92.50px"><b class="mm">ORD</b><b class="m">20160628133813001</b></div><div class="c c" style="left:144.50px;width:123.50px">王者荣耀<b class="mm">/</b>苹果<b class="mm">QQ/</b>手<b class="mm">Q</b><b class="m">29</b>区</div><div class="c l" style="left:268.00px;width:273.00px">白金二到钻石二三星</div><div class="c r" style="left:541.00px;width:43.50px"><b class="m">150<i class="dt">.</i>00</b></div><div class="c r" style="left:584.50px;width:69.50px"><b class="m">30<i class="dt">.</i>00</b></div><div class="c r" style="left:654.00px;width:69.00px"><b class="m">30<i class="dt">.</i>00</b></div><div class="c l" style="left:723.00px;width:31.50px"><b class="m">36</b>小时</div><div class="c c" style="left:754.50px;width:53.50px"><b class="m">1</b></div><div class="c c" style="left:808.00px;width:67.50px"><b class="m">9</b></div><div class="c l" style="left:875.50px;width:207.00px">王者荣耀发单</div></div><div class="row even" style="top:434.07px"><div class="c c" style="left:-0.50px;width:29.50px"><b class="m">22</b></div><div class="c c" style="left:29.00px;width:23.00px">是</div><div class="c l" style="left:52.00px;width:92.50px"><b class="mm">ORD</b><b class="m">20160627191822002</b></div><div class="c c" style="left:144.50px;width:123.50px">王者荣耀<b class="mm">/</b>苹果微信<b class="mm">/</b>微信<b class="m">1</b>区</div><div class="c l" style="left:268.00px;width:273.00px">默认区<b class="mm"> </b>赏金<b class="m">10</b>胜</div><div class="c r" style="left:541.00px;width:43.50px"><b class="m">128<i class="dt">.</i>00</b></div><div class="c r" style="left:584.50px;width:69.50px"><b class="m">40<i class="dt">.</i>00</b></div><div class="c r" style="left:654.00px;width:69.00px"><b class="m">40<i class="dt">.</i>00</b></div><div class="c l" style="left:723.00px;width:31.50px"><b class="m">12</b>小时</div><div class="c c" style="left:754.50px;width:53.50px"><b class="m">1</b></div><div class="c c" style="left:808.00px;width:67.50px"><b class="m">3</b></div><div class="c l" style="left:875.50px;width:207.00px">末小小</div></div><div class="row odd" style="top:453.84px"><div class="c c" style="left:-0.50px;width:29.50px"><b class="m">23</b></div><div class="c c" style="left:29.00px;width:23.00px">是</div><div class="c l" style="left:52.00px;width:92.50px"><b class="mm">ORD</b><b class="m">20160628125929002</b></div><div class="c c" style="left:144.50px;width:123.50px">王者荣耀<b class="mm">/</b>安卓微信<b class="mm">/</b>微信<b class="m">4</b>区</div><div class="c l" style="left:268.00px;width:273.00px">白金<b class="m">3</b><b class="mm">-</b>王者</div><div class="c r" style="left:541.00px;width:43.50px"><b class="m">120<i class="dt">.</i>00</b></div><div class="c r" style="left:584.50px;width:69.50px"><b class="m">50<i class="dt">.</i>00</b></div><div class="c r" style="left:654.00px;width:69.00px"><b class="m">50<i class="dt">.</i>00</b></div><div class="c l" style="left:723.00px;width:31.50px"><b class="m">24</b>小时</div><div class="c c" style="left:754.50px;width:53.50px"><b class="m">19</b></div><div class="c c" style="left:808.00px;width:67.50px"><b class="m">9</b></div><div class="c l" style="left:875.50px;width:207.00px">新手<b class="mm">USR</b><b class="m">201605223009</b></div></div><div class="row even" style="top:473.61px"><div class="c c" style="left:-0.50px;width:29.50px"><b class="m">24</b></div><div class="c c" style="left:29.00px;width:23.00px">是</div><div class="c l" style="left:52.00px;width:92.50px"><b class="mm">ORD</b><b class="m">20160628145731006</b></div><div class="c c" style="left:144.50px;width:123.50px">王者荣耀<b class="mm">/</b>安卓微信<b class="mm">/</b>微信<b class="m">1</b>区</div><div class="c l" style="left:268.00px;width:273.00px">默认区<b class="mm"> </b>铂金三<b class="mm"> - </b>钻石三<b class="mm"> </b>热门英雄：貂蝉<b class="mm"> </b>猴子<b class="mm"> </b>韩信<b class="mm"> </b>符文<b class="m">136</b></div><div class="c r" style="left:541.00px;width:43.50px"><b class="m">120<i class="dt">.</i>00</b></div><div class="c r" style="left:584.50px;width:69.50px"><b class="m">80<i class="dt">.</i>00</b></div><div class="c r" style="left:654.00px;width:69.00px"><b class="m">80<i class="dt">.</i>00</b></div><div class="c l" style="left:723.00px;width:31.50px"><b class="m">18</b>小时</div><div class="c c" style="left:754.50px;width:53.50px"><b class="m">2</b></div><div class="c c" style="left:808.00px;width:67.50px"><b class="m">4</b></div><div class="c l" style="left:875.50px;width:207.00px">发福单</div></div><div class="row odd" style="top:493.38px"><div class="c c" style="left:-0.50px;width:29.50px"><b class="m">25</b></div><div class="c c" style="left:29.00px;width:23.00px">是</div><div class="c l" style="left:52.00px;width:92.50px"><b class="mm">ORD</b><b class="m">20160627230806001</b></div><div class="c c" style="left:144.50px;width:123.50px">王者荣耀<b class="mm">/</b>安卓<b class="mm">QQ/</b>手<b class="mm">Q</b><b class="m">15</b>区</div><div class="c l" style="left:268.00px;width:273.00px">白银<b class="m">2</b>一星到白金<b class="m">2</b></div><div class="c r" style="left:541.00px;width:43.50px"><b class="m">105<i class="dt">.</i>00</b></div><div class="c r" style="left:584.50px;width:69.50px"><b class="m">100<i class="dt">.</i>00</b></div><div class="c r" style="left:654.00px;width:69.00px"><b class="m">100<i class="dt">.</i>00</b></div><div class="c l" style="left:723.00px;width:31.50px"><b class="m">60</b>小时</div><div class="c c" style="left:754.50px;width:53.50px"><b class="m">0</b></div><div class="c c" style="left:808.00px;width:67.50px"><b class="m">12</b></div><div class="c l" style="left:875.50px;width:207.00px">虎牙丶<b class="m">0</b><b class="mm">vlod</b></div></div><div class="row even" style="top:513.15px"><div class="c c" style="left:-0.50px;width:29.50px"><b class="m">26</b></div><div class="c c" style="left:29.00px;width:23.00px">是</div><div class="c l" style="left:52.00px;width:92.50px"><b class="mm">ORD</b><b class="m">20160628134139003</b></div><div class="c c" style="left:144.50px;width:123.50px">王者荣耀<b class="mm">/</b>安卓<b class="mm">QQ/</b>手<b class="mm">Q</b><b class="m">147</b>区</div><div class="c l" style="left:268.00px;width:273.00px">白金三五星钻三三星</div><div class="c r" style="left:541.00px;width:43.50px"><b class="m">90<i class="dt">.</i>00</b></div><div class="c r" style="left:584.50px;width:69.50px"><b class="m">30<i class="dt">.</i>00</b></div><div class="c r" style="left:654.00px;width:69.00px"><b class="m">30<i class="dt">.</i>00</b></div><div class="c l" style="left:723.00px;width:31.50px"><b class="m">24</b>小时</div><div class="c c" style="left:754.50px;width:53.50px"><b class="m">1</b></div><div class="c c" style="left:808.00px;width:67.50px"><b class="m">9</b></div><div class="c l" style="left:875.50px;width:207.00px">王者荣耀发单</div></div><div class="row odd" style="top:532.92px"><div class="c c" style="left:-0.50px;width:29.50px"><b class="m">27</b></div><div class="c c" style="left:29.00px;width:23.00px">是</div><div class="c l" style="left:52.00px;width:92.50px"><b class="mm">ORD</b><b class="m">20160628133938002</b></div><div class="c c" style="left:144.50px;width:123.50px">王者荣耀<b class="mm">/</b>苹果<b class="mm">QQ/</b>手<b class="mm">Q</b><b class="m">52</b>区</div><div class="c l" style="left:268.00px;width:273.00px">白金<b class="m">3</b>到钻<b class="m">3</b></div><div class="c r" style="left:541.00px;width:43.50px"><b class="m">80<i class="dt">.</i>00</b></div><div class="c r" style="left:584.50px;width:69.50px"><b class="m">30<i class="dt">.</i>00</b></div><div class="c r" style="left:654.00px;width:69.00px"><b class="m">30<i class="dt">.</i>00</b></div><div class="c l" style="left:723.00px;width:31.50px"><b class="m">24</b>小时</div><div class="c c" style="left:754.50px;width:53.50px"><b class="m">1</b></div><div class="c c" style="left:808.00px;width:67.50px"><b class="m">9</b></div><div class="c l" style="left:875.50px;width:207.00px">王者荣耀发单</div></div>
<div class="vl" style="left:28.00px"></div><div class="vl" style="left:51.00px"></div><div class="vl" style="left:143.50px"></div><div class="vl" style="left:267.00px"></div><div class="vl" style="left:540.00px"></div><div class="vl" style="left:583.50px"></div><div class="vl" style="left:653.00px"></div><div class="vl" style="left:722.00px"></div><div class="vl" style="left:753.50px"></div><div class="vl" style="left:807.00px"></div><div class="vl" style="left:874.50px"></div>
</div>
<div class="abs" id="hscroll"></div>
<div class="abs" style="left:131px;top:727.5px;width:993px;height:6px;background:linear-gradient(#b4b4b4 0,#b4b4b4 1.5px,#f4f4f4 1.5px,#f0f0f0);border-left:1px solid #888"></div>
<svg class="abs" style="left:118px;top:727px" width="13" height="7" viewBox="0 0 13 7"><path d="M4 6.5 L8 3.5 L8.5 6.5 Z" fill="#303030"/></svg>
<svg class="abs" style="left:704px;top:729px" width="12" height="5" viewBox="0 0 12 5"><path d="M3 1 V5 M5.5 1 V5 M8 1 V5" stroke="#707070" stroke-width="0.8"/></svg>
<div class="abs" style="left:0;top:733px;width:1124px;height:1px;background:#8c8c8c"></div>
<div class="abs" id="lb0"></div>
<div class="abs" id="lb1"></div>
<div class="abs" id="lb2"></div>
</body></html>
